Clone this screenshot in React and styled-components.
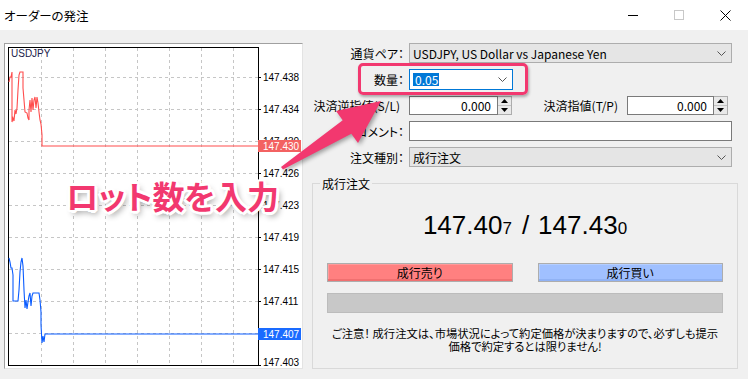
import React from "react";
import styled, { createGlobalStyle } from "styled-components";

const PINK = "#f2386f";

const Global = createGlobalStyle`
  html, body { margin: 0; padding: 0; background: #f0f0f0; }
  body {
    font-family: "Noto Sans CJK JP", "Noto Sans", sans-serif;
    font-feature-settings: "palt";
    color: #000;
  }
  * { box-sizing: border-box; }
`;

const Window = styled.div`
  position: relative;
  width: 748px;
  height: 379px;
  overflow: hidden;
  background: #f0f0f0;
`;

const TitleBar = styled.div`
  height: 30px;
  background: #fff;
  display: flex;
  align-items: center;
  padding-left: 4px;
`;

const Title = styled.div`
  flex: 1;
  font-size: 12.5px;
`;

const Controls = styled.div`
  display: flex;
  height: 100%;
`;

const CtrlButton = styled.div`
  width: 46px;
  display: flex;
  align-items: center;
  justify-content: center;
`;

const Body = styled.div`
  display: flex;
  gap: 7px;
  padding: 13px 10px 0 4px;
`;

const ChartFrame = styled.div`
  flex: none;
  width: 299px;
  height: 326px;
  background: #fff;
  border: 1px solid;
  border-color: #a0a0a0 #e3e3e3 #e3e3e3 #a0a0a0;
  svg { display: block; }
`;

const AxisText = styled.text`
  font-family: "Liberation Sans", Arial, sans-serif;
  font-size: 10px;
`;

const RightPanel = styled.div`
  flex: 1;
  min-width: 0;
  display: flex;
  flex-direction: column;
`;

const Form = styled.div`
  display: grid;
  grid-template-columns: 94px minmax(0, 1fr);
  grid-template-rows: 20px 21px 19px 20px 20px;
  column-gap: 5px;
  row-gap: 6px;
  padding-right: 6px;
`;

const Label = styled.div`
  align-self: center;
  text-align: right;
  font-size: 12px;
  white-space: nowrap;
  padding-right: ${(p) => (p.$plain ? "4px" : "0")};
`;

const Combo = styled.div`
  height: 100%;
  width: ${(p) => (p.$w ? `${p.$w}px` : "100%")};
  display: flex;
  align-items: center;
  justify-content: space-between;
  border: 1px solid ${(p) => (p.$focused ? "#0078d7" : "#adadad")};
  background: ${(p) => (p.$focused ? "#fff" : "#e5e5e5")};
  padding: 0 5px 0 3px;
  font-size: 12px;
  white-space: nowrap;
`;

const Selected = styled.span`
  background: #0078d7;
  color: #fff;
  line-height: 13px;
  padding: 0 1px 0 2px;
`;

const Row = styled.div`
  display: flex;
  align-items: stretch;
  padding-right: 4px;
`;

const SpinBox = styled.div`
  display: flex;
  width: ${(p) => p.$w}px;
  height: 100%;
`;

const NumInput = styled.div`
  flex: 1;
  display: flex;
  align-items: center;
  justify-content: flex-end;
  background: #fff;
  border: 1px solid #7a7a7a;
  padding-right: 6px;
  font-size: 12px;
`;

const Spinner = styled.div`
  width: 14px;
  display: flex;
  flex-direction: column;
  border: 1px solid #adadad;
  border-left: none;
  background: #e9e9e9;
`;

const SpinHalf = styled.div`
  flex: 1;
  display: flex;
  align-items: center;
  justify-content: center;
  & + & { border-top: 1px solid #c4c4c4; }
`;

const InlineLabel = styled.div`
  margin-left: auto;
  margin-right: 9px;
  align-self: center;
  font-size: 12px;
  white-space: nowrap;
`;

const TextInput = styled.div`
  height: 100%;
  background: #fff;
  border: 1px solid #7a7a7a;
`;

const Group = styled.div`
  margin: 16px 0 0 2px;
  height: 186px;
  border: 1px solid #d9d9d9;
  padding: 0 14px;
  display: flex;
  flex-direction: column;
`;

const Legend = styled.div`
  align-self: flex-start;
  margin: -8px 0 0 -7px;
  padding: 0 2px;
  background: #f0f0f0;
  font-size: 12px;
  line-height: 16px;
`;

const Price = styled.div`
  margin-top: 18px;
  text-align: center;
  font-family: "Liberation Sans", Arial, sans-serif;
  font-size: 26px;
  line-height: 30px;
  small { font-size: 17px; }
  i { font-style: normal; margin: 0 9px 0 10px; }
`;

const Buttons = styled.div`
  margin-top: 19px;
  display: grid;
  grid-template-columns: 1fr 1fr;
  column-gap: 25px;
`;

const OrderButton = styled.div`
  height: 19px;
  display: flex;
  align-items: center;
  justify-content: center;
  font-size: 12px;
  border: 1px solid #adadad;
  background: ${(p) => (p.$side === "sell" ? "#ff8080" : "#a0c0ff")};
  box-shadow: inset 0 -2px 0 ${(p) => (p.$side === "sell" ? "#f07070" : "#90b2f4")},
    inset 1px 1px 0 ${(p) => (p.$side === "sell" ? "#ff9a9a" : "#b4ceff")};
`;

const StatusBar = styled.div`
  margin-top: 11px;
  height: 20px;
  background: #c8c8c8;
  border: 1px solid #bcbcbc;
`;

const Notice = styled.div`
  margin-top: 14px;
  text-align: center;
  font-size: 11.3px;
  line-height: 13px;
  white-space: nowrap;
`;

const Highlight = styled.div`
  position: absolute;
  left: 358px;
  top: 63px;
  width: 170px;
  height: 32px;
  border: 3px solid ${PINK};
  border-radius: 5px;
  box-shadow: 1px 2px 3px rgba(0, 0, 0, 0.3);
`;

const Callout = styled.div`
  position: absolute;
  left: 66px;
  top: 175px;
  font-size: 32px;
  font-weight: 700;
  line-height: 40px;
  color: ${PINK};
  white-space: nowrap;
  text-shadow: 2px 0 #fff, -2px 0 #fff, 0 2px #fff, 0 -2px #fff,
    2px 2px #fff, -2px -2px #fff, 2px -2px #fff, -2px 2px #fff,
    3px 1px #fff, -3px 1px #fff, 1px 3px #fff, 1px -3px #fff,
    3px 4px 6px rgba(0, 0, 0, 0.45);
`;

const ArrowLayer = styled.svg`
  position: absolute;
  left: 0;
  top: 0;
  pointer-events: none;
  filter: drop-shadow(2px 2px 2px rgba(0, 0, 0, 0.35));
`;

const Chevron = () => (
  <svg width="9" height="5" viewBox="0 0 9 5">
    <polyline points="0.5,0.5 4.5,4.5 8.5,0.5" fill="none" stroke="#555" strokeWidth="1" />
  </svg>
);

const Spin = () => (
  <Spinner>
    <SpinHalf>
      <svg width="7" height="4" viewBox="0 0 7 4"><polygon points="3.5,0 7,4 0,4" fill="#000" /></svg>
    </SpinHalf>
    <SpinHalf>
      <svg width="7" height="4" viewBox="0 0 7 4"><polygon points="0,0 7,0 3.5,4" fill="#000" /></svg>
    </SpinHalf>
  </Spinner>
);

const gridX = [41, 73, 105, 137, 169, 201, 233];
const levels = [
  [77, "147.438"], [109, "147.434"], [141, "147.430"], [173, "147.426"],
  [205, "147.423"], [237, "147.419"], [269, "147.415"], [301, "147.411"],
  [333, "147.407"], [365, "147.403"],
];

const redPts = "9,82 10,77 11,77 12,72 12,122 13,118 14,121 15,110 16,114 17,108 18,90 19,75 20,72 23,72 23,88 24,100 25,112 27,113 28,118 29,120 29,110 30,100 31,112 32,98 33,110 34,100 35,97 36,108 37,97 38,103 39,112 40,120 41,124 42,135 42,146 258,146";
const bluePts = "9,258 10,262 11,268 12,268 13,275 13,301 18,301 19,290 20,272 21,262 22,258 23,266 24,290 25,308 26,300 27,309 28,302 29,296 30,293 31,306 32,296 33,293 39,293 40,300 41,312 41,325 42,343 43,336 44,342 45,334 258,334";

const Chart = () => (
  <svg width="297" height="324" viewBox="5 44 297 324">
    <rect x="8.5" y="47.5" width="250" height="318" fill="#fff" stroke="none" />
    {gridX.map((x) => (
      <line key={x} x1={x + 0.5} y1="48" x2={x + 0.5} y2="366" stroke="#c6c6c6" strokeDasharray="3 3" />
    ))}
    {levels.slice(0, 9).map(([y]) => (
      <line key={y} x1="9" y1={y + 0.5} x2="258" y2={y + 0.5} stroke="#c6c6c6" strokeDasharray="3 3" />
    ))}
    <rect x="8.5" y="47.5" width="250" height="318" fill="none" stroke="#000" />
    {levels.map(([y, t]) => (
      <g key={t}>
        <line x1="258" y1={Math.min(y, 365) + 0.5} x2="261" y2={Math.min(y, 365) + 0.5} stroke="#000" />
        <AxisText x="263" y={y === 365 ? 366 : y + 4} fill="#000">{t}</AxisText>
      </g>
    ))}
    <AxisText x="11" y="57" fill="#1a1a4a">USDJPY</AxisText>
    <polyline points={redPts} fill="none" stroke="#ff4d4d" strokeWidth="1.1" />
    <polyline points={bluePts} fill="none" stroke="#0a5cff" strokeWidth="1.1" />
    <rect x="258" y="140" width="43" height="12" fill="#f36262" />
    <AxisText x="263" y="150" fill="#fff">147.430</AxisText>
    <rect x="258" y="328" width="43" height="12" fill="#1a6bff" />
    <AxisText x="263" y="338" fill="#fff">147.407</AxisText>
  </svg>
);

export default function App() {
  return (
    <Window>
      <Global />
      <TitleBar>
        <Title>オーダーの発注</Title>
        <Controls>
          <CtrlButton>
            <svg width="10" height="10" viewBox="0 0 10 10"><line x1="0" y1="5.5" x2="10" y2="5.5" stroke="#000" /></svg>
          </CtrlButton>
          <CtrlButton>
            <svg width="10" height="10" viewBox="0 0 10 10"><rect x="0.5" y="0.5" width="9" height="9" fill="none" stroke="#c8c8c8" /></svg>
          </CtrlButton>
          <CtrlButton>
            <svg width="11" height="11" viewBox="0 0 11 11">
              <line x1="0.5" y1="0.5" x2="10.5" y2="10.5" stroke="#000" />
              <line x1="10.5" y1="0.5" x2="0.5" y2="10.5" stroke="#000" />
            </svg>
          </CtrlButton>
        </Controls>
      </TitleBar>
      <Body>
        <ChartFrame>
          <Chart />
        </ChartFrame>
        <RightPanel>
          <Form>
            <Label>通貨ペア：</Label>
            <Combo>
              <span>USDJPY, US Dollar vs Japanese Yen</span>
              <Chevron />
            </Combo>
            <Label>数量：</Label>
            <Combo $focused $w={104}>
              <Selected>0.05</Selected>
              <Chevron />
            </Combo>
            <Label $plain>決済逆指値(S/L)</Label>
            <Row>
              <SpinBox $w={103}>
                <NumInput>0.000</NumInput>
                <Spin />
              </SpinBox>
              <InlineLabel>決済指値(T/P)</InlineLabel>
              <SpinBox $w={101}>
                <NumInput>0.000</NumInput>
                <Spin />
              </SpinBox>
            </Row>
            <Label>コメント：</Label>
            <TextInput />
            <Label>注文種別：</Label>
            <Combo>
              <span>成行注文</span>
              <Chevron />
            </Combo>
          </Form>
          <Group>
            <Legend>成行注文</Legend>
            <Price>
              147.40<small>7</small><i>/</i>147.43<small>0</small>
            </Price>
            <Buttons>
              <OrderButton $side="sell">成行売り</OrderButton>
              <OrderButton $side="buy">成行買い</OrderButton>
            </Buttons>
            <StatusBar />
            <Notice>
              ご注意！ 成行注文は、市場状況によって約定価格が決まりますので、必ずしも提示
              <br />
              価格で約定するとは限りません!
            </Notice>
          </Group>
        </RightPanel>
      </Body>
      <Highlight />
      <Callout>ロット数を入力</Callout>
      <ArrowLayer width="748" height="379" viewBox="0 0 748 379">
        <polygon
          points="281,167 342.7,120.2 336,111 381,101 358,143 351.3,133.8 283,169.5"
          fill={PINK}
        />
      </ArrowLayer>
    </Window>
  );
}
